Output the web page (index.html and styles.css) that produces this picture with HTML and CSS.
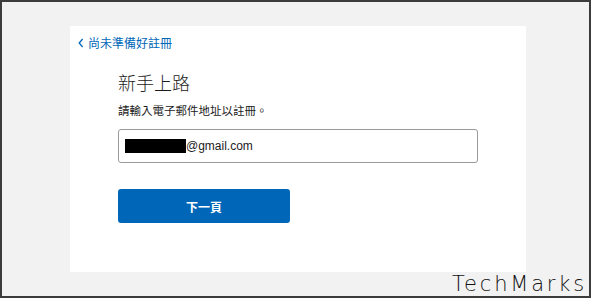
FILE: index.html
```html
<!DOCTYPE html>
<html lang="zh-Hant">
<head>
<meta charset="utf-8">
<title>新手上路</title>
<link rel="stylesheet" href="styles.css">
</head>
<body>
<div class="frame">
  <div class="card">
    <a class="back" href="#">
      <svg class="chev" width="6" height="10" viewBox="0 0 6 10"><path d="M4.6 1 L1.2 5 L4.6 9" fill="none" stroke="#0067b8" stroke-width="1.3"/></svg>
      <span>尚未準備好註冊</span>
    </a>
    <div class="content">
      <h1 class="title">新手上路</h1>
      <p class="desc">請輸入電子郵件地址以註冊。</p>
      <div class="input"><span class="redact"></span><span class="mail">@gmail.com</span></div>
      <button class="next">下一頁</button>
    </div>
  </div>
  <div class="mark">TechMarks</div>
</div>
</body>
</html>
```
FILE: styles.css
```css
* { box-sizing: border-box; }
html, body { margin: 0; padding: 0; }
body { width: 591px; height: 298px; overflow: hidden; }
.frame {
  position: relative;
  width: 591px;
  height: 298px;
  border: 2px solid #3c3c3c;
  background: #f2f2f2;
  padding: 24px 0 0 68px;
  font-family: "Liberation Sans", "Noto Sans CJK TC", sans-serif;
}
.card {
  width: 456px;
  height: 246px;
  background: #fff;
  padding: 9px 8px;
}
.back {
  display: flex;
  align-items: center;
  gap: 4px;
  height: 16px;
  color: #0067b8;
  text-decoration: none;
  font-size: 12px;
  line-height: 16px;
  font-family: "Noto Sans CJK TC", sans-serif;
}
.chev { display: block; }
.content { margin: 19px 0 0 40px; }
.title {
  margin: 0;
  font-family: "Noto Sans CJK TC", sans-serif;
  font-weight: 300;
  font-size: 18px;
  line-height: 24px;
  color: #1b1b1b;
}
.desc {
  margin: 8px 0 0;
  font-family: "Noto Sans CJK TC", sans-serif;
  font-size: 11.5px;
  line-height: 16px;
  color: #1b1b1b;
}
.input {
  margin-top: 11px;
  width: 360px;
  height: 34px;
  border: 1px solid #9a9a9a;
  border-radius: 3px;
  padding: 0 6px;
  display: flex;
  align-items: center;
  font-size: 12px;
  color: #1b1b1b;
}
.redact {
  display: inline-block;
  width: 61px;
  height: 14px;
  background: #000;
}
.next {
  display: block;
  margin-top: 26px;
  width: 172px;
  height: 34px;
  border: 0;
  border-radius: 3px;
  background: #0067b8;
  color: #fff;
  font-family: "Noto Sans CJK TC", sans-serif;
  font-weight: 700;
  font-size: 12px;
}
.mark {
  position: absolute;
  right: 2px;
  bottom: 0;
  font-family: "DejaVu Sans", sans-serif;
  font-weight: 200;
  font-size: 21px;
  letter-spacing: 2.8px;
  line-height: 24px;
  color: #111;
}
```
